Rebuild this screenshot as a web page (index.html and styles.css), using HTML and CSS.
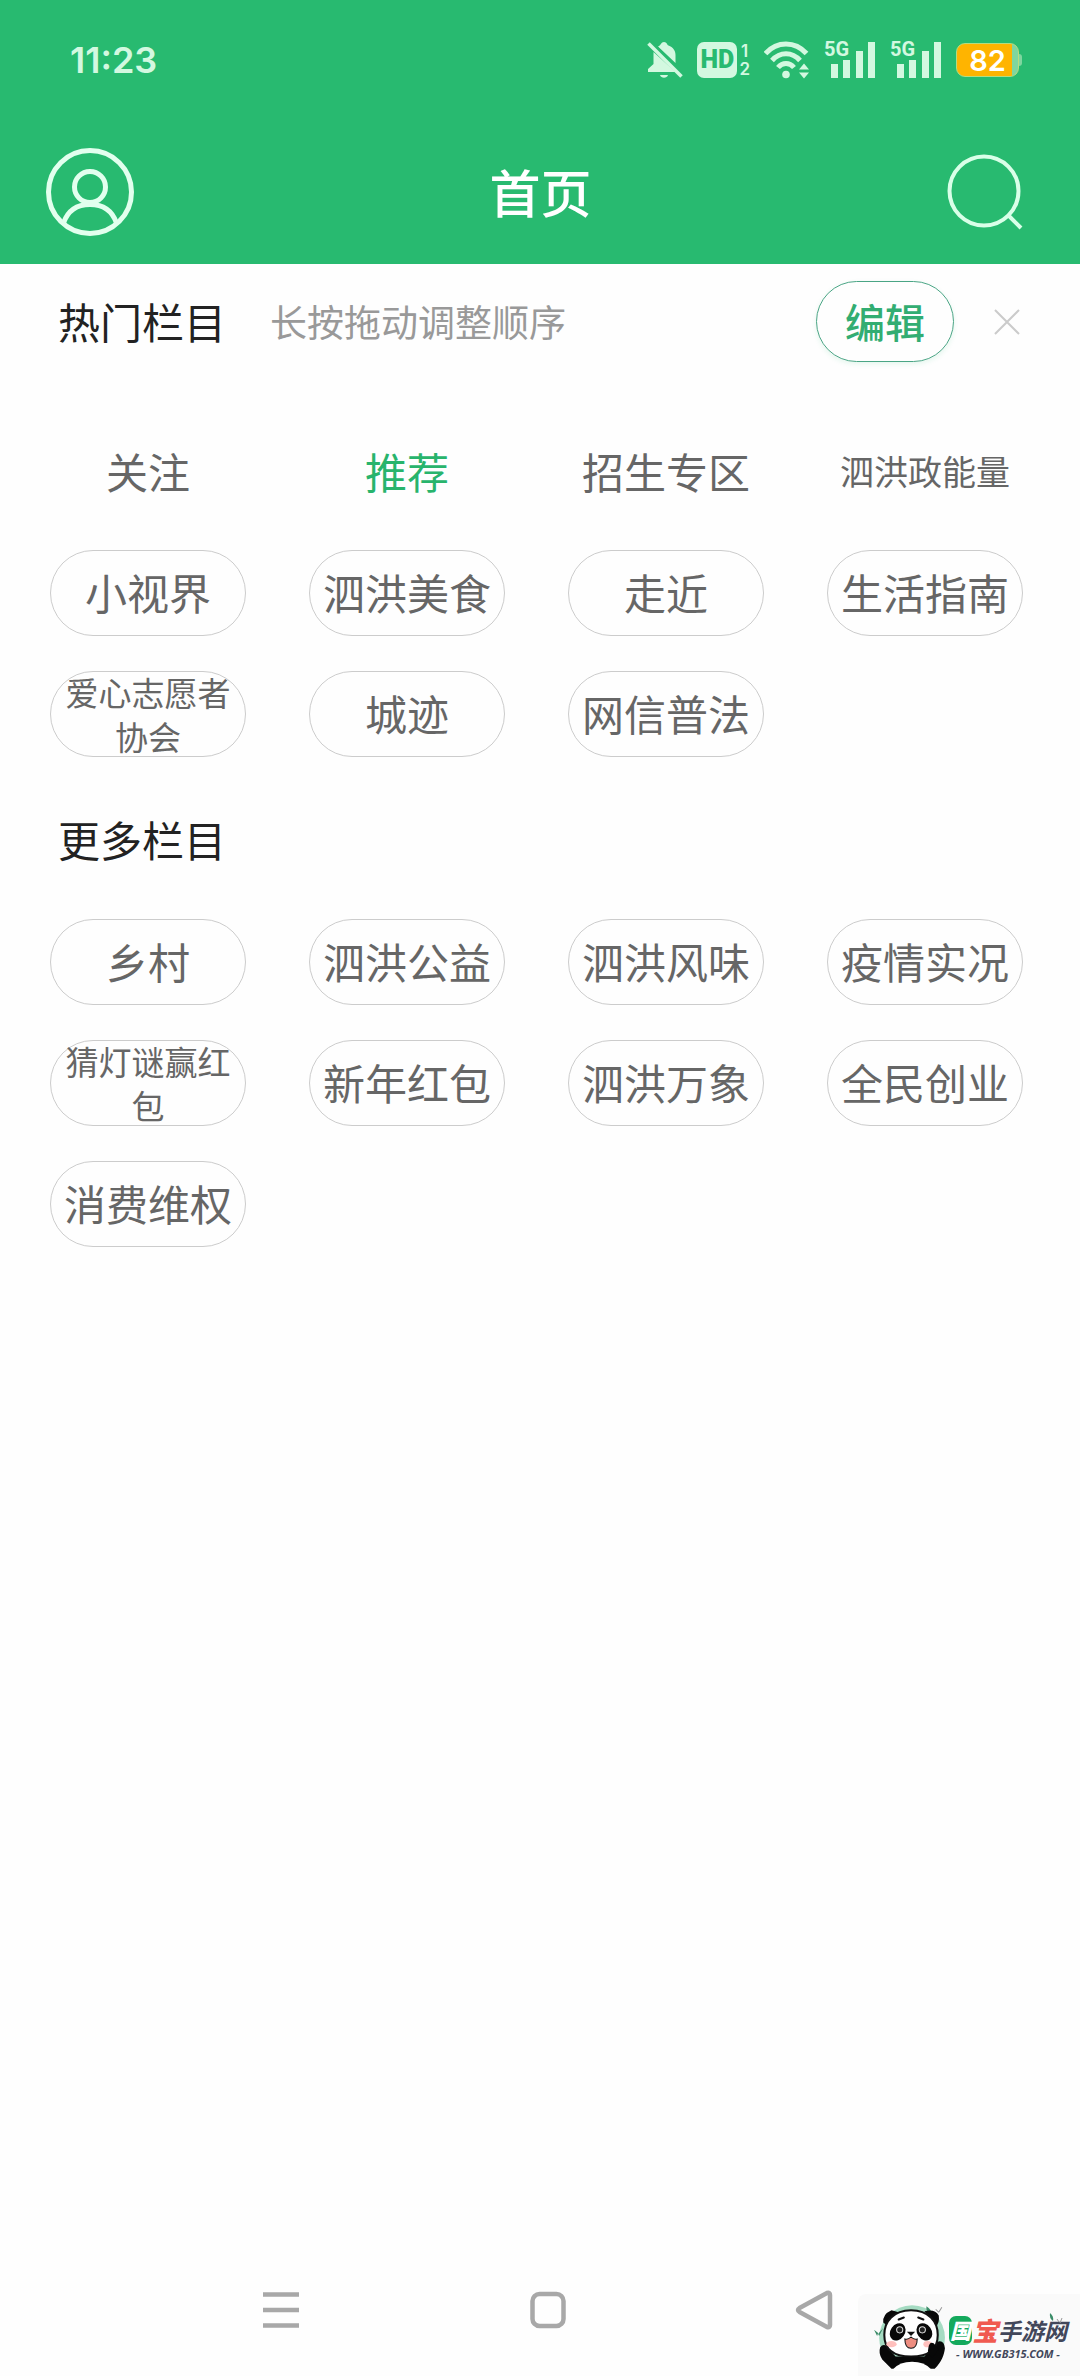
FILE: index.html
```html
<!DOCTYPE html>
<html lang="zh-CN">
<head>
    <meta charset="UTF-8">
    <meta name="viewport" content="width=device-width, initial-scale=1.0">
    <title>首页</title>
    <link rel="stylesheet" href="styles.css">
</head>
<body>
    <header class="header">
        <!-- 状态栏 -->
        <div class="status-bar">
            <span class="time">11:23</span>
            <div class="status-icons">
                <svg class="icon-bell" width="36" height="38" viewBox="0 0 36 38" fill="#d3f8e0">
                    <path d="M12 5C14 4 14 1 17 1s3 3 4.500 3.500C26 6 28.500 9.500 28.500 14v8L11 5.500zM6.500 11l22 20H1v-3l5.500-5z"/>
                    <path d="M13 34h8c-1 3.500-7 3.500-8 0z"/>
                    <path d="M4 1l32 32" stroke="#28ba70" stroke-width="3"/>
                    <path d="M1.500 2.500l33 33" stroke="#d3f8e0" stroke-width="3.500"/>
                </svg>
                <div class="hd">
                    <span class="hd-box">HD</span>
                    <span class="hd-sim"><span>1</span><span>2</span></span>
                </div>
                <svg class="icon-wifi" width="46" height="38" viewBox="0 0 46 38" fill="none" stroke="#d3f8e0" stroke-width="5">
                    <path d="M1.500 12.500C13-.2 31-.2 42.500 12.500"/>
                    <path d="M8 19.500c8-9 20-9 28 0"/>
                    <path d="M14 26.500c4.500-5.500 11.500-5.500 16 0"/>
                    <circle cx="22" cy="33.500" r="3.800" fill="#d3f8e0" stroke="none"/>
                    <path d="M35 28.500l5-6 5 6zM35 31.500l5 6 5-6z" fill="#d3f8e0" stroke="none"/>
                </svg>
                <div class="signal">
                    <span class="signal-label">5G</span>
                    <svg width="52" height="38" viewBox="0 0 52 38" fill="#d3f8e0">
                        <path d="M7 23h7v14H7zM19 19h7v18h-7zM32 10h7v27h-7zM44 1h7v36h-7z"/>
                    </svg>
                </div>
                <div class="signal">
                    <span class="signal-label">5G</span>
                    <svg width="52" height="38" viewBox="0 0 52 38" fill="#d3f8e0">
                        <path d="M7 23h7v14H7zM19 19h7v18h-7zM32 10h7v27h-7zM44 1h7v36h-7z"/>
                    </svg>
                </div>
                <div class="battery"><span class="battery-level">82</span></div>
            </div>
        </div>

        <!-- 标题栏 -->
        <div class="nav-bar">
            <button class="icon-btn" type="button" aria-label="我的">
                <svg width="88" height="88" viewBox="0 0 88 88" fill="none" stroke="#e2ffee" stroke-width="5">
                    <circle cx="44" cy="44" r="41.500"/>
                    <circle cx="44" cy="39" r="15.500"/>
                    <path d="M17.500 75C22 62 32 56.500 44 56.500S66 62 70.500 75"/>
                </svg>
            </button>
            <h1>首页</h1>
            <button class="icon-btn" type="button" aria-label="搜索">
                <svg width="76" height="76" viewBox="0 0 76 76" fill="none" stroke="#d9ffe8" stroke-width="4">
                    <circle cx="37" cy="37" r="34.500"/>
                    <path d="M61.500 61.500l12.500 12.500"/>
                </svg>
            </button>
        </div>
    </header>

    <main class="content">
        <!-- 热门栏目 -->
        <section>
            <div class="section-head">
                <h2>热门栏目</h2>
                <p class="tip">长按拖动调整顺序</p>
                <button class="edit-btn" type="button">编辑</button>
                <button class="icon-btn" type="button" aria-label="关闭">
                    <svg width="26" height="26" viewBox="0 0 26 26" stroke="#cbcbcb" stroke-width="2">
                        <path d="M1 1l24 24M25 1L1 25"/>
                    </svg>
                </button>
            </div>
            <div class="channels">
                <button class="channel fixed" type="button">关注</button>
                <button class="channel fixed active" type="button">推荐</button>
                <button class="channel fixed" type="button">招生专区</button>
                <button class="channel fixed medium" type="button">泗洪政能量</button>
                <button class="channel" type="button">小视界</button>
                <button class="channel" type="button">泗洪美食</button>
                <button class="channel" type="button">走近</button>
                <button class="channel" type="button">生活指南</button>
                <button class="channel small" type="button">爱心志愿者协会</button>
                <button class="channel" type="button">城迹</button>
                <button class="channel" type="button">网信普法</button>
            </div>
        </section>

        <!-- 更多栏目 -->
        <section>
            <div class="section-head more">
                <h2>更多栏目</h2>
            </div>
            <div class="channels">
                <button class="channel" type="button">乡村</button>
                <button class="channel" type="button">泗洪公益</button>
                <button class="channel" type="button">泗洪风味</button>
                <button class="channel" type="button">疫情实况</button>
                <button class="channel small" type="button">猜灯谜赢红包</button>
                <button class="channel" type="button">新年红包</button>
                <button class="channel" type="button">泗洪万象</button>
                <button class="channel" type="button">全民创业</button>
                <button class="channel" type="button">消费维权</button>
            </div>
        </section>
    </main>

    <!-- 系统导航 -->
    <nav class="system-nav">
        <button class="icon-btn" type="button" aria-label="菜单">
            <svg width="38" height="40" viewBox="0 0 38 40" stroke="#a8a8a8" stroke-width="4.500">
                <path d="M1 4.500h36M1 20h36M1 35.500h36"/>
            </svg>
        </button>
        <button class="icon-btn" type="button" aria-label="主页">
            <svg width="38" height="40" viewBox="0 0 38 40" fill="none" stroke="#a8a8a8" stroke-width="4.500">
                <rect x="3.500" y="4" width="31" height="32" rx="7"/>
            </svg>
        </button>
        <button class="icon-btn" type="button" aria-label="返回">
            <svg width="38" height="40" viewBox="0 0 38 40" fill="none" stroke="#a8a8a8" stroke-width="4.500" stroke-linejoin="round">
                <path d="M32 3L4.500 18q-3 2 0 4L32 37q3 1 3-2V5q0-3-3-2z"/>
            </svg>
        </button>
    </nav>

    <div class="watermark">
        <svg width="74" height="68" viewBox="0 0 72 66">
            <circle cx="38" cy="34" r="32" fill="#a5dbc2"/>
            <path d="M52 3q5 3 5 8-6-2-5-8zM1 26l4 3-1 3zM10 24l-5 6 1 2z" fill="#3b8c68"/>
            <path d="M61 6l3 3M67 4l-3 5" stroke="#999" fill="none"/>
            <path d="M7 43q-2 6 2 12l9 9h42c7-7 9-13 10-20q-1-9-8-6L50 52H22L12 41q-3-1-5 2z" fill="#080808"/>
            <path d="M10 19q-1-8 8-12l7 2-10 14zM50 8q10-3 14 4 1 7-3 11z" fill="#080808"/>
            <path d="M37 7C20 7 11 18 11 31s8 21 26 21 26-8 26-21S54 7 37 7z" fill="#fff" stroke="#111" stroke-width="2"/>
            <path d="M20 64q6-7 18-7t18 7v2H20z" fill="#fff"/>
            <ellipse cx="24" cy="28" rx="7" ry="9" transform="rotate(35 24 28)" fill="#080808"/>
            <ellipse cx="50" cy="28" rx="7" ry="9" transform="rotate(-35 50 28)" fill="#080808"/>
            <circle cx="26" cy="26" r="3" fill="#222" stroke="#ddd"/>
            <circle cx="48" cy="26" r="3" fill="#222" stroke="#ddd"/>
            <path d="M25 16l5-2M44 14l5 2" stroke="#111" stroke-width="2" stroke-linecap="round"/>
            <path d="M33 28h8l-4 4z" fill="#111"/>
            <path d="M31 35q3 1 6-2 3 3 6 2c0 5-2 9-6 9s-6-4-6-9z" fill="#ee8d80" stroke="#111"/>
            <ellipse cx="18" cy="40" rx="5" ry="3" fill="#ffc0bd"/>
            <ellipse cx="53" cy="40" rx="4" ry="3" fill="#ffc0bd"/>
            <path d="M54 43q1-6 5-4l5 6-6 8q-6-3-4-10z" fill="#080808"/>
        </svg>
        <div class="watermark-text">
            <div class="brand"><span class="brand-green">国</span><span class="brand-red">宝</span><span class="brand-rest">手游网</span></div>
            <div class="site">- WWW.GB315.COM -</div>
        </div>
        <svg class="leaf" width="16" height="12" viewBox="0 0 16 12">
            <path d="M2 1q4 3 3 8-4-3-3-8z" fill="#3b8c68"/>
            <path d="M9 7l2 3M14 6l-2 5" stroke="#999" fill="none"/>
        </svg>
    </div>
</body>
</html>
```
FILE: styles.css
```css
* {
    margin: 0;
    padding: 0;
    box-sizing: border-box;
}

body {
    display: flex;
    flex-direction: column;
    min-height: 100vh;
    position: relative;
    font-family: "Noto Sans CJK SC", sans-serif;
    background-color: #fefefe;
    color: #222;
}

button {
    font-family: inherit;
    background: none;
    border: none;
    cursor: pointer;
}

svg {
    display: block;
}

.icon-btn {
    flex-shrink: 0;
}

/* 顶部 */
.header {
    background-color: #28ba70;
    color: #fff;
    padding-bottom: 28px;
}

.status-bar {
    display: flex;
    justify-content: space-between;
    align-items: center;
    height: 120px;
    padding: 0 61px 0 70px;
    font-family: Inter, sans-serif;
    color: #d3f8e0;
}

.time {
    font-size: 36px;
    font-weight: 600;
}

.status-icons {
    display: flex;
    align-items: center;
    gap: 14px;
}

.hd {
    display: flex;
    align-items: center;
    gap: 2px;
}

.hd-box {
    width: 40px;
    height: 36px;
    border-radius: 7px;
    background-color: #d3f8e0;
    color: #28ba70;
    font-family: Roboto, sans-serif;
    font-size: 25px;
    font-weight: 900;
    line-height: 36px;
    text-align: center;
}

.hd-sim {
    display: flex;
    flex-direction: column;
    font-size: 17px;
    font-weight: 600;
    line-height: 18px;
    text-align: center;
}

.signal {
    position: relative;
}

.signal-label {
    position: absolute;
    top: 0;
    left: 0;
    font-family: Roboto, sans-serif;
    font-size: 20px;
    font-weight: 700;
    line-height: 16px;
}

.battery {
    position: relative;
    width: 63px;
    height: 34px;
    border: 1px solid #b5dc80;
    border-radius: 9px;
    background: linear-gradient(to right, #ffb400 55px, #7fd69f 55px);
    text-align: center;
}

.battery::after {
    content: "";
    position: absolute;
    top: 10px;
    right: -4px;
    width: 3px;
    height: 12px;
    border-radius: 0 3px 3px 0;
    background-color: #7fd69f;
}

.battery-level {
    display: block;
    color: #fff;
    font-size: 29px;
    font-weight: 600;
    line-height: 33px;
}

.nav-bar {
    display: flex;
    justify-content: space-between;
    align-items: center;
    height: 116px;
    padding: 28px 57px 0 46px;
}

h1 {
    padding-bottom: 2px;
    font-size: 51px;
    font-weight: 500;
    line-height: 60px;
}

/* 栏目 */
.content {
    flex: 1;
}

.section-head {
    display: flex;
    align-items: center;
    padding: 17px 60px 67px 58px;
}

.section-head.more {
    padding-top: 52px;
    padding-bottom: 48px;
}

h2 {
    padding-bottom: 2px;
    font-size: 42px;
    font-weight: 400;
    line-height: 60px;
}

.tip {
    padding-bottom: 2px;
    margin-left: 44px;
    font-size: 37px;
    line-height: 60px;
    color: #999;
}

.edit-btn {
    width: 138px;
    height: 81px;
    padding-bottom: 2px;
    margin-left: auto;
    margin-right: 40px;
    border: 1px solid #4aa585;
    border-radius: 41px;
    box-shadow: 0 2px 5px rgba(40, 186, 112, 0.12);
    color: #32ad72;
    font-size: 40px;
    font-weight: 500;
}

.channels {
    display: grid;
    grid-template-columns: repeat(4, 1fr);
    gap: 35px 63px;
    padding: 0 57px 0 50px;
}

.channel {
    display: flex;
    justify-content: center;
    align-items: center;
    height: 86px;
    padding: 0 12px 2px;
    border: 1px solid #ccc;
    border-radius: 43px;
    color: #666;
    font-size: 42px;
    line-height: 60px;
}

.channel.fixed {
    border-color: transparent;
}

.channel.active {
    color: #28b46c;
}

.channel.medium {
    font-size: 34px;
}

.channel.small {
    padding-bottom: 0;
    font-size: 33px;
    line-height: 44px;
}

/* 底部 */
.system-nav {
    display: flex;
    justify-content: space-between;
    align-items: center;
    height: 132px;
    padding: 0 247px 0 262px;
}

.watermark {
    position: absolute;
    right: 0;
    bottom: 0;
    display: flex;
    align-items: center;
    gap: 2px;
    width: 222px;
    height: 82px;
    padding: 4px 0 0 15px;
    border-top-left-radius: 8px;
    background-color: #fafafa;
}

.watermark-text {
    font-style: italic;
    font-weight: 700;
    white-space: nowrap;
}

.brand {
    display: flex;
    align-items: center;
    line-height: 34px;
}

.brand-green {
    padding: 0 1px;
    border-radius: 7px;
    background-color: #14a95c;
    color: #fff;
    font-size: 21px;
    font-weight: 900;
    line-height: 29px;
}

.brand-red {
    color: #f05a50;
    font-size: 26px;
    font-weight: 900;
}

.brand-rest {
    color: #42475a;
    font-size: 23px;
}

.site {
    font-family: "Noto Sans", sans-serif;
    font-size: 11px;
    line-height: 14px;
    text-align: center;
    color: #42475a;
}

.leaf {
    position: absolute;
    top: 18px;
    right: 16px;
}
```
